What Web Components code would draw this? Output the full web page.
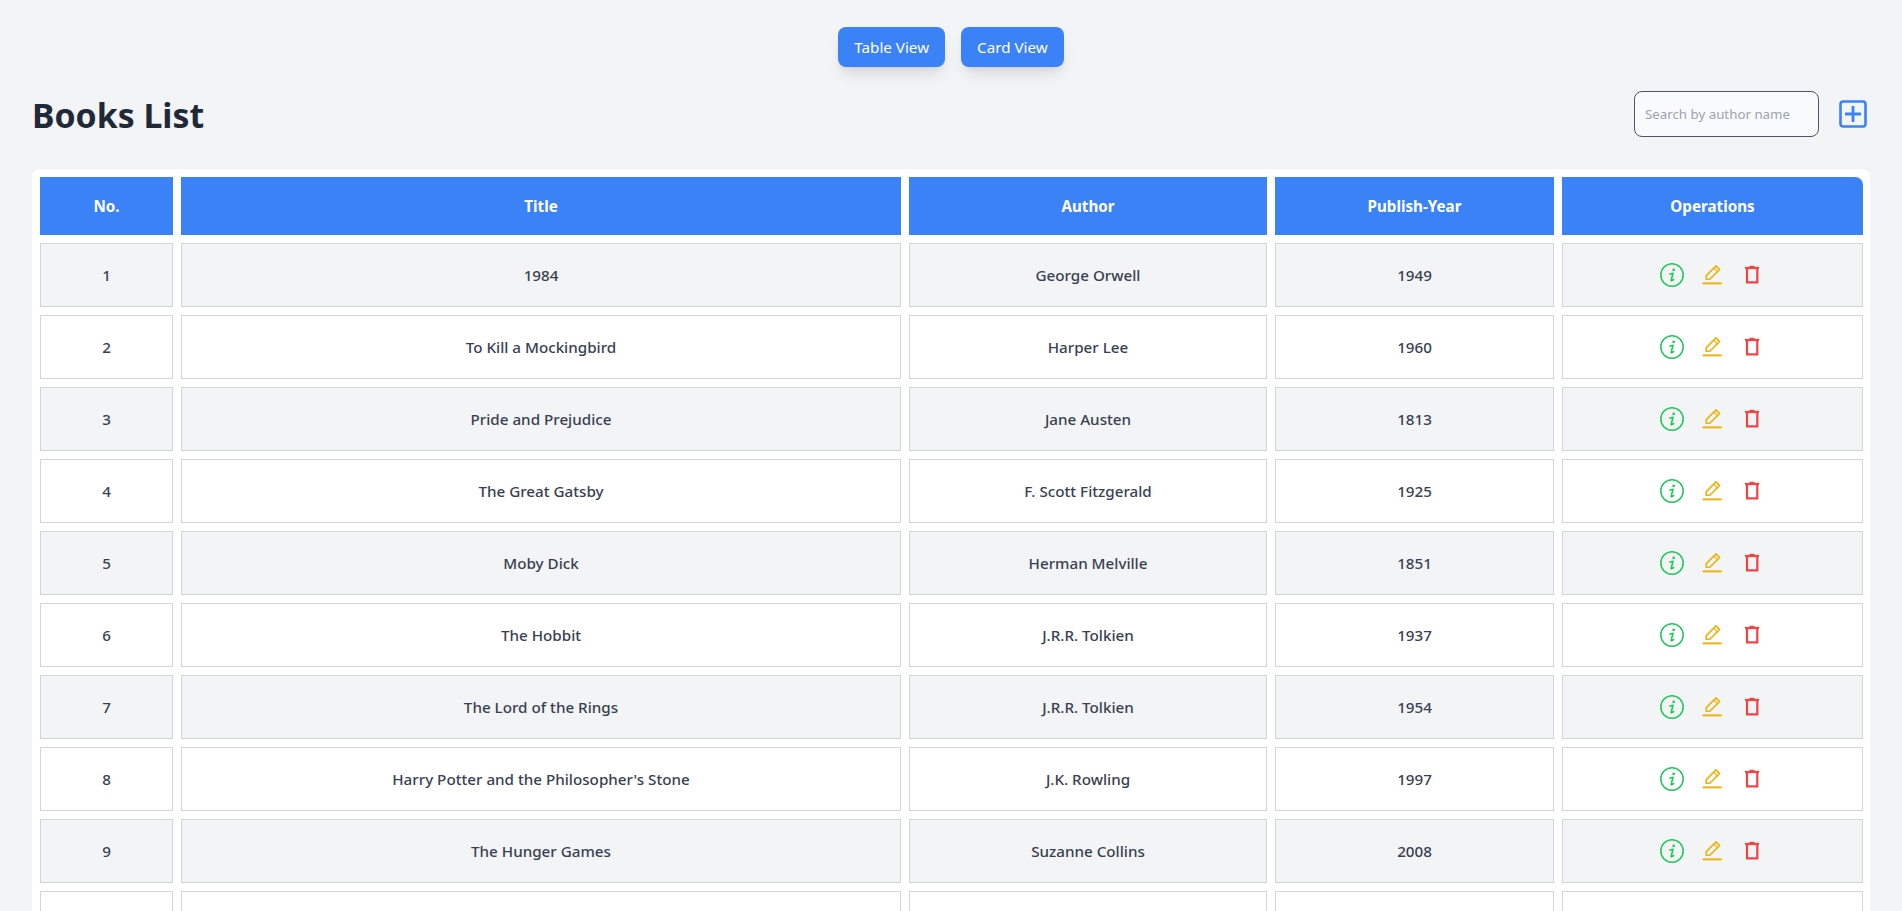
<!DOCTYPE html>
<html lang="en">
<head>
<meta charset="utf-8">
<title>Books List</title>
<style>
    html{ scrollbar-width: none; }
    body{
        margin: 0;
        height: 100vh;
        overflow: hidden;
        background: #f3f4f6;
        font-family: "Noto Sans", "Open Sans", sans-serif;
    }
</style>
</head>
<body>
<books-page></books-page>
<script>
const ICONS = {
    info: `<svg width="24" height="24" viewBox="0 0 24 24" fill="none" stroke="#22c55e"><circle cx="12" cy="12" r="11.2" stroke-width="1.5"/><path d="M10 11l3-.6-1.9 7.2 2.6-.9" stroke-width="1.7" stroke-linecap="round" stroke-linejoin="round"/><circle cx="13.6" cy="6.9" r="1.3" fill="#22c55e" stroke="none"/></svg>`,
    edit: `<svg width="24" height="24" viewBox="0 0 24 24" fill="none" stroke="#eab308"><path d="M6.2 16.2v-3.6L16 3l3.6 3.6-9.8 9.6z" stroke-width="1.6"/><path d="M13.8 5.2l3.6 3.6" stroke-width="1.2"/><path d="M2.7 20.4h19" stroke-width="2"/></svg>`,
    trash: `<svg width="24" height="24" viewBox="0 0 24 24" fill="none" stroke="#ef4444"><path d="M7 5v14.4h10.3V5" stroke-width="2.2"/><path d="M5 5h14" stroke-width="2.2"/><path d="M9.5 3.4h5" stroke-width="1.2"/></svg>`,
    plus: `<svg width="28" height="28" viewBox="0 0 28 28" fill="none" stroke="#3b82f6"><rect x="1.5" y="1.5" width="25" height="25" rx="2.5" stroke-width="2.6"/><path d="M14 6v16M6 14h16" stroke-width="2.8"/></svg>`
};

const BOOKS = [
    ['1', '1984', 'George Orwell', '1949'],
    ['2', 'To Kill a Mockingbird', 'Harper Lee', '1960'],
    ['3', 'Pride and Prejudice', 'Jane Austen', '1813'],
    ['4', 'The Great Gatsby', 'F. Scott Fitzgerald', '1925'],
    ['5', 'Moby Dick', 'Herman Melville', '1851'],
    ['6', 'The Hobbit', 'J.R.R. Tolkien', '1937'],
    ['7', 'The Lord of the Rings', 'J.R.R. Tolkien', '1954'],
    ['8', "Harry Potter and the Philosopher's Stone", 'J.K. Rowling', '1997'],
    ['9', 'The Hunger Games', 'Suzanne Collins', '2008']
];

const COLUMNS = '133px 720px 358px 279px 301px';

class ViewButton extends HTMLElement{
    constructor(){
        super();
        this.attachShadow({mode: 'open'}).innerHTML = `
            <style>
                :host{
                    display: block;
                    padding: 0 16px;
                    height: 40px;
                    line-height: 40px;
                    color: #fff;
                    font-size: 15.2px;
                    background: #3b82f6;
                    border-radius: 8px;
                    box-shadow: 0 10px 15px -3px rgba(0,0,0,0.1), 0 4px 6px -4px rgba(0,0,0,0.1);
                }
            </style>
            <slot></slot>
        `;
    }
}
customElements.define('view-button', ViewButton);

class BookHeader extends HTMLElement{
    constructor(){
        super();
        this.attachShadow({mode: 'open'}).innerHTML = `
            <style>
                :host{
                    display: grid;
                    grid-template-columns: ${COLUMNS};
                    gap: 8px;
                }
                div{
                    height: 58px;
                    display: flex;
                    align-items: center;
                    justify-content: center;
                    background: #3b82f6;
                    color: #fff;
                    font-size: 15.2px;
                    font-weight: 700;
                }
                div:first-child{ border-top-left-radius: 8px; }
                div:last-child{ border-top-right-radius: 8px; }
            </style>
            <div>No.</div><div>Title</div><div>Author</div><div>Publish-Year</div><div>Operations</div>
        `;
    }
}
customElements.define('book-header', BookHeader);

class BookRow extends HTMLElement{
    constructor(){
        super();
        this.attachShadow({mode: 'open'});
    }
    connectedCallback(){
        const cells = ['no', 'title', 'author', 'year'].map(name => `<div>${this.getAttribute(name) || ''}</div>`).join('');
        const ops = this.hasAttribute('no') ? `${ICONS.info}${ICONS.edit}${ICONS.trash}` : '';
        this.shadowRoot.innerHTML = `
            <style>
                :host{
                    display: grid;
                    grid-template-columns: ${COLUMNS};
                    gap: 8px;
                }
                div{
                    box-sizing: border-box;
                    height: 64px;
                    display: flex;
                    align-items: center;
                    justify-content: center;
                    border: 1px solid #d1d5db;
                    background: var(--row-bg, #fff);
                    color: #374151;
                    font-size: 15.2px;
                    font-weight: 500;
                }
                .ops{ gap: 16px; padding-right: 1px; }
                svg{ display: block; }
            </style>
            ${cells}<div class="ops">${ops}</div>
        `;
    }
}
customElements.define('book-row', BookRow);

class BooksTable extends HTMLElement{
    constructor(){
        super();
        this.attachShadow({mode: 'open'}).innerHTML = `
            <style>
                :host{
                    display: flex;
                    flex-direction: column;
                    gap: 8px;
                    padding: 8px;
                    background: #fff;
                    border-radius: 8px;
                }
                ::slotted(book-row:nth-of-type(odd)){ --row-bg: #f3f4f6; }
            </style>
            <book-header></book-header>
            <slot></slot>
        `;
    }
}
customElements.define('books-table', BooksTable);

class BooksPage extends HTMLElement{
    constructor(){
        super();
        const rows = BOOKS.map(([no, title, author, year]) => {
            const row = document.createElement('book-row');
            row.setAttribute('no', no);
            row.setAttribute('title', title);
            row.setAttribute('author', author);
            row.setAttribute('year', year);
            return row.outerHTML;
        }).join('');
        this.attachShadow({mode: 'open'}).innerHTML = `
            <style>
                :host{
                    display: block;
                    padding: 27px 32px 32px;
                }
                nav{
                    display: flex;
                    justify-content: center;
                    gap: 16px;
                }
                header{
                    display: flex;
                    align-items: center;
                    justify-content: space-between;
                    margin: 24px 0 32px;
                    height: 46px;
                }
                h1{
                    margin: 0;
                    padding-top: 2px;
                    font-size: 33.8px;
                    font-weight: 700;
                    color: #1f2937;
                }
                .tools{
                    display: flex;
                    align-items: center;
                    gap: 20px;
                    padding-right: 3px;
                }
                input{
                    box-sizing: border-box;
                    width: 185px;
                    height: 46px;
                    padding: 0 10px;
                    border: 1px solid #4b5563;
                    border-radius: 8px;
                    background: #f9fafb;
                    font: 13.3px "Noto Sans", sans-serif;
                    outline: none;
                }
                input::placeholder{ color: #9ca3af; opacity: 1; }
                svg{ display: block; }
            </style>
            <nav>
                <view-button>Table View</view-button>
                <view-button>Card View</view-button>
            </nav>
            <header>
                <h1>Books List</h1>
                <div class="tools">
                    <input type="text" placeholder="Search by author name">
                    ${ICONS.plus}
                </div>
            </header>
            <books-table>${rows}<book-row></book-row></books-table>
        `;
    }
}
customElements.define('books-page', BooksPage);
</script>
</body>
</html>
